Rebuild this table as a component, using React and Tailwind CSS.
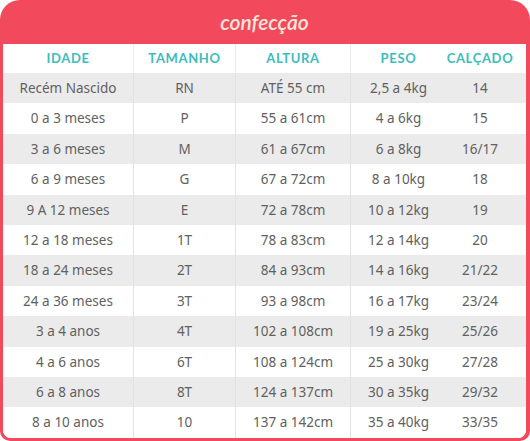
import React from 'react';

const rows = [
  ['Recém Nascido', 'RN', 'ATÉ 55 cm', '2,5 a 4kg', '14'],
  ['0 a 3 meses', 'P', '55 a 61cm', '4 a 6kg', '15'],
  ['3 a 6 meses', 'M', '61 a 67cm', '6 a 8kg', '16/17'],
  ['6 a 9 meses', 'G', '67 a 72cm', '8 a 10kg', '18'],
  ['9 A 12 meses', 'E', '72 a 78cm', '10 a 12kg', '19'],
  ['12 a 18 meses', '1T', '78 a 83cm', '12 a 14kg', '20'],
  ['18 a 24 meses', '2T', '84 a 93cm', '14 a 16kg', '21/22'],
  ['24 a 36 meses', '3T', '93 a 98cm', '16 a 17kg', '23/24'],
  ['3 a 4 anos', '4T', '102 a 108cm', '19 a 25kg', '25/26'],
  ['4 a 6 anos', '6T', '108 a 124cm', '25 a 30kg', '27/28'],
  ['6 a 8 anos', '8T', '124 a 137cm', '30 a 35kg', '29/32'],
  ['8 a 10 anos', '10', '137 a 142cm', '35 a 40kg', '33/35'],
];

const headers = ['IDADE', 'TAMANHO', 'ALTURA', 'PESO', 'CALÇADO'];

// column widths follow the photo: separators at 134, 236, 351
const cols = 'grid grid-cols-[131px_102px_115px_95px_80px]';

const App = () => {
  return (
    <div className="w-[530px] h-[441px] bg-white font-['Lato',sans-serif]">
      <div className="w-[530px] h-[441px] bg-[#f24a5c] rounded-t-[20px] rounded-b-[10px] pl-[3px] pr-[4px] pb-[3px] flex flex-col">
        {/* Title */}
        <div className="h-[44px] flex items-center justify-center">
          <span className="text-[#fbe6da] text-[21px] font-semibold italic leading-none -mt-[2px]">
            confecção
          </span>
        </div>

        {/* Table */}
        <div className="flex-1 bg-white rounded-b-[8px] overflow-hidden">
          <div className={`${cols} h-[29px] items-center`}>
            {headers.map((h, i) => (
              <div
                key={h}
                className={`h-full flex items-center justify-center text-[#3dbcbd] text-[13px] font-bold tracking-wider ${i < 3 ? 'border-r border-[#ececec]' : ''} ${i === 4 ? 'pr-[12px]' : ''}`}
              >
                {h}
              </div>
            ))}
          </div>
          {rows.map((r, ri) => (
            <div
              key={ri}
              className={`${cols} h-[30.4px] ${ri % 2 === 0 ? 'bg-[#ebebeb]' : 'bg-white'}`}
            >
              {r.map((c, ci) => (
                <div
                  key={ci}
                  className={`flex items-center justify-center font-['Noto_Sans',sans-serif] text-[13.5px] text-[#616161] ${ci < 3 ? 'border-r border-[#e2e2e2]' : ''} ${ci === 4 ? 'pr-[12px]' : ''}`}
                >
                  {c}
                </div>
              ))}
            </div>
          ))}
        </div>
      </div>
    </div>
  );
};

export default App;
